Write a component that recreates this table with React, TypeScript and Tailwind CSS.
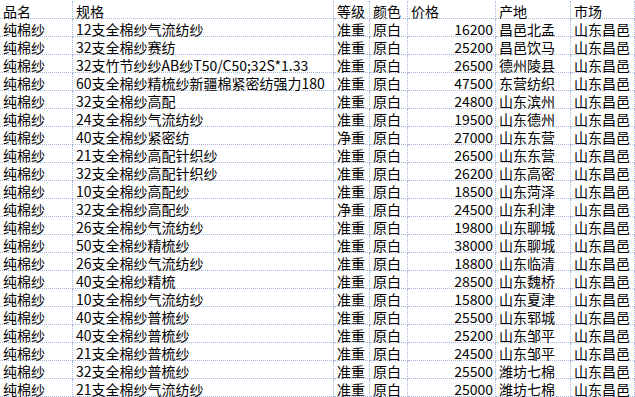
import React from 'react';

type Row = [string, string, string, string, string, string, string];

const rows: Row[] = [
  ['纯棉纱', '12支全棉纱气流纺纱', '准重', '原白', '16200', '昌邑北孟', '山东昌邑'],
  ['纯棉纱', '32支全棉纱赛纺', '准重', '原白', '25200', '昌邑饮马', '山东昌邑'],
  ['纯棉纱', '32支竹节纱纱AB纱T50/C50;32S*1.33', '准重', '原白', '26500', '德州陵县', '山东昌邑'],
  ['纯棉纱', '60支全棉纱精梳纱新疆棉紧密纺强力180', '准重', '原白', '47500', '东营纺织', '山东昌邑'],
  ['纯棉纱', '32支全棉纱高配', '准重', '原白', '24800', '山东滨州', '山东昌邑'],
  ['纯棉纱', '24支全棉纱气流纺纱', '准重', '原白', '19500', '山东德州', '山东昌邑'],
  ['纯棉纱', '40支全棉纱紧密纺', '净重', '原白', '27000', '山东东营', '山东昌邑'],
  ['纯棉纱', '21支全棉纱高配针织纱', '准重', '原白', '26500', '山东东营', '山东昌邑'],
  ['纯棉纱', '32支全棉纱高配针织纱', '准重', '原白', '26200', '山东高密', '山东昌邑'],
  ['纯棉纱', '10支全棉纱高配纱', '准重', '原白', '18500', '山东菏泽', '山东昌邑'],
  ['纯棉纱', '32支全棉纱高配纱', '净重', '原白', '24500', '山东利津', '山东昌邑'],
  ['纯棉纱', '26支全棉纱气流纺纱', '准重', '原白', '19800', '山东聊城', '山东昌邑'],
  ['纯棉纱', '50支全棉纱精梳纱', '准重', '原白', '38000', '山东聊城', '山东昌邑'],
  ['纯棉纱', '26支全棉纱气流纺纱', '准重', '原白', '18800', '山东临清', '山东昌邑'],
  ['纯棉纱', '40支全棉纱精梳', '准重', '原白', '28500', '山东魏桥', '山东昌邑'],
  ['纯棉纱', '10支全棉纱气流纺纱', '准重', '原白', '15800', '山东夏津', '山东昌邑'],
  ['纯棉纱', '40支全棉纱普梳纱', '准重', '原白', '25500', '山东郓城', '山东昌邑'],
  ['纯棉纱', '40支全棉纱普梳纱', '准重', '原白', '25200', '山东邹平', '山东昌邑'],
  ['纯棉纱', '21支全棉纱普梳纱', '准重', '原白', '24500', '山东邹平', '山东昌邑'],
  ['纯棉纱', '32支全棉纱普梳纱', '准重', '原白', '25500', '潍坊七棉', '山东昌邑'],
  ['纯棉纱', '21支全棉纱气流纺纱', '准重', '原白', '25000', '潍坊七棉', '山东昌邑'],
];

const header: Row = ['品名', '规格', '等级', '颜色', '价格', '产地', '市场'];

const cell =
  'h-[18px] border-r border-b border-dotted border-[#a7b6dc] pl-[3px] pr-[2px] leading-[17px] whitespace-nowrap';

const Line: React.FC<{ r: Row; head?: boolean }> = ({ r, head }) => (
  <>
    {r.map((v, i) => (
      <div key={i} className={cell + (i === 4 && !head ? ' text-right' : '')}>
        <span className="relative top-[1.5px]">{v}</span>
      </div>
    ))}
  </>
);

const App: React.FC = () => {
  return (
    <div className="w-[635px] h-[397px] overflow-hidden bg-white pt-px text-black text-[14px] font-['Noto_Sans_CJK_SC',sans-serif]">
      <div className="grid grid-cols-[73px_261px_36px_38px_88px_75px_64px]">
        <Line r={header} head />
        {rows.map((r, i) => (
          <Line key={i} r={r} />
        ))}
      </div>
    </div>
  );
};

export default App;
